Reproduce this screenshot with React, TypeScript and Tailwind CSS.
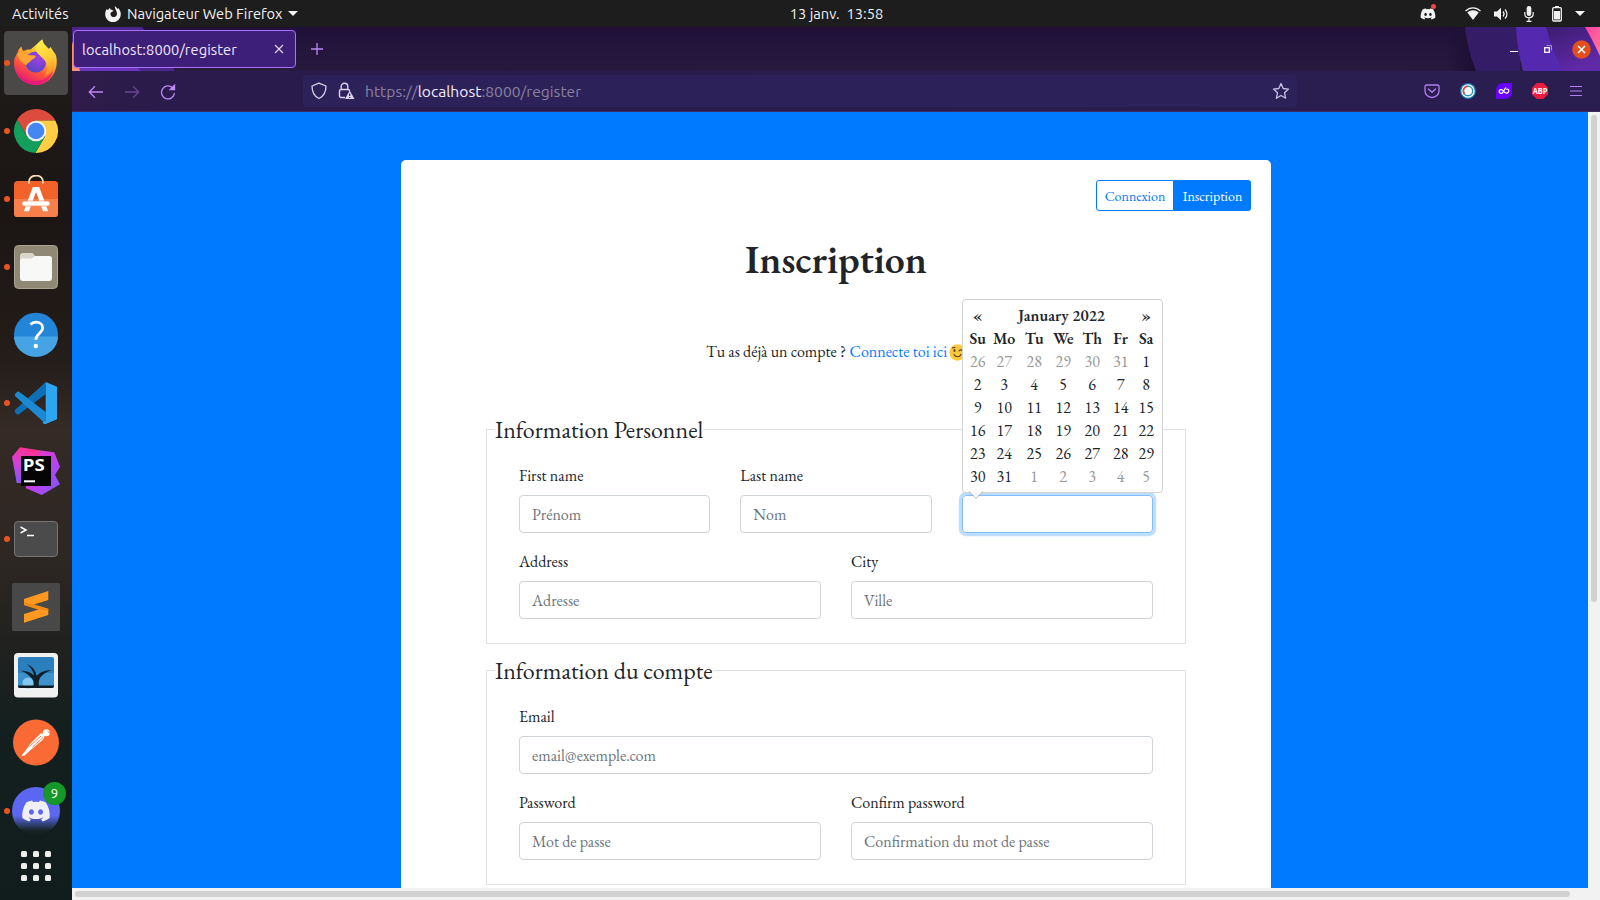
import type { ReactNode } from 'react';
import { FaDiscord } from 'react-icons/fa';

function DockSlot({ active, dot, children }: { active?: boolean; dot?: boolean; children: ReactNode }) {
  return (
    <div className={active ? 'relative flex h-16 w-16 shrink-0 items-center justify-center rounded bg-[#4b4948]' : 'relative flex h-16 w-16 shrink-0 items-center justify-center'}>
      {dot && <span className="absolute top-[29px] left-0 h-1.5 w-1.5 rounded-full bg-[#e95420]" />}
      {children}
    </div>
  );
}

function FirefoxLogo() {
  return (
    <svg width="48" height="48" viewBox="0 0 48 48">
      <defs>
        <linearGradient id="ffBody" x1="0.8" y1="0" x2="0.3" y2="1">
          <stop offset="0" stopColor="#fff44f" />
          <stop offset="0.4" stopColor="#ffb02e" />
          <stop offset="0.65" stopColor="#ff5a36" />
          <stop offset="1" stopColor="#e3127a" />
        </linearGradient>
        <radialGradient id="ffGlobe" cx="0.65" cy="0.3" r="0.8">
          <stop offset="0" stopColor="#a33fe0" />
          <stop offset="1" stopColor="#5247c8" />
        </radialGradient>
        <linearGradient id="ffTail" x1="0.3" y1="0" x2="0.6" y2="1">
          <stop offset="0" stopColor="#fff04d" />
          <stop offset="0.6" stopColor="#ffc833" />
          <stop offset="1" stopColor="#ff8a2b" />
        </linearGradient>
      </defs>
      <path d="M9.5 7.5c.2 2 1 3.500 2 4.500 2-1.300 4.500-1.800 7-1.500L30.300.5c.5 4 3 6 6.500 9.500l2-2c1 3 3.500 5 5.200 8.500C47.500 30 39 46 24 46 11 46 2 36 2 24c0-5 2-8 3.500-10C6 11 7.500 9 9.500 7.500z" fill="url(#ffBody)" />
      <circle cx="23.700" cy="23" r="10.500" fill="url(#ffGlobe)" />
      <path d="M30.300.5c.5 4 3 6 6.500 9.500 3 3.500 5.200 8 5 13-.3 7-4 12-9.800 14.500 3-3.500 4-8 2.500-12.500-1.500-5-7-8-10-12C22 9 25 4 30.300.5z" fill="url(#ffTail)" />
      <path d="M5.500 14c3.500-1.500 8-.5 11 2 3 .3 5.500.2 7.500 1-1 2.500-3.500 3-5 4.500-1 2-4 2-4.500 5C11 24 6 21 5.500 14z" fill="#ffa436" />
      <path d="M4 31c4 8 12 12 20 11 8-.6 14-5 17-10-2 8-9 14-17 14C14 46 6 39 4 31z" fill="#e6187f" opacity=".75" />
    </svg>
  );
}

function ChromeLogo() {
  return (
    <svg width="48" height="48" viewBox="0 0 48 48">
      <path d="M5.240 12.500A22 22 0 0 1 43.300 13.500L24 13.500V24L14.900 29.250Z" fill="#dd4b3e" />
      <path d="M43.300 13.500A22 22 0 0 1 23.400 46L33.100 29.250 24 24V13.500Z" fill="#ffce44" />
      <path d="M23.400 46A22 22 0 0 1 5.240 12.500L14.900 29.250 24 24 33.100 29.250Z" fill="#149e5c" />
      <circle cx="24" cy="24" r="10.300" fill="#f3f3f3" />
      <circle cx="24" cy="24" r="8.300" fill="#4486f4" />
    </svg>
  );
}

function SoftwareLogo() {
  return (
    <svg width="48" height="48" viewBox="0 0 48 48">
      <rect x="2" y="6" width="44" height="36" rx="3.500" fill="#f2622a" />
      <path d="M2 24h44v14.500a3.500 3.500 0 0 1-3.500 3.500h-37A3.500 3.500 0 0 1 2 38.500z" fill="#f67f4c" />
      <path d="M17 8.500V7c0-4 3-6.500 7-6.500S31 3 31 7v1.500" fill="none" stroke="#f4dcb4" strokeWidth="1.800" />
      <path d="M11.800 36.300 20.800 12h6.400l9 24.300h-5.200L24 17 17 36.300z" fill="#fff" />
      <rect x="10" y="26" width="28" height="5" rx="2.500" fill="#fff" stroke="#f4804f" strokeWidth=".6" />
    </svg>
  );
}

function FilesLogo() {
  return (
    <svg width="48" height="48" viewBox="0 0 48 48">
      <rect x="2.500" y="2.500" width="43" height="43" rx="4" fill="#8f8874" stroke="#aaa493" />
      <path d="M8 13c0-2 1-3 3-3h8.500c1.500 0 2 .8 2.800 2l1 2H37c2 0 3 1 3 3v5H8z" fill="#d9d6cc" />
      <path d="M8 18c0-1.500 1-2.500 2.500-2.500H20l3-2.500h14.500c1.500 0 2.500 1 2.500 2.500V35c0 2-1 3-3 3H11c-2 0-3-1-3-3z" fill="#f8f8f6" />
    </svg>
  );
}

function HelpLogo() {
  return (
    <svg width="48" height="48" viewBox="0 0 48 48">
      <circle cx="24" cy="23.700" r="22" fill="#2385d8" />
      <path d="M2 25.500a22 20.200 0 0 0 44 0z" fill="#47a4e4" />
      <path d="M18.500 13.500c1.500-1.500 3.500-2.300 5.500-2.300 4 0 6.600 2.200 6.600 5.600 0 5.500-6.800 6-6.800 12" fill="none" stroke="#fff" strokeWidth="2.800" />
      <circle cx="23.800" cy="35" r="2.200" fill="#fff" />
    </svg>
  );
}

function CodeLogo() {
  return (
    <svg width="48" height="48" viewBox="0 0 48 48">
      <path d="M3 31 33.700 3V15L7 35.300Q5.500 36 4.500 35L3 33.300Q2.300 32 3 31Z" fill="#0e6fb6" />
      <path d="M3 17Q2.300 15.500 3.500 14.500L5 13Q6 12 7.500 13L33.700 33V45Z" fill="#1b8ad3" />
      <path d="M33.700 3 45 7.700V40.300L33.700 45C32 45.300 31 44.500 30.500 43.500L33.700 42Z" fill="#2ea5ef" />
    </svg>
  );
}

function StormLogo() {
  return (
    <svg width="48" height="48" viewBox="0 0 48 48">
      <defs>
        <linearGradient id="psA" x1="0" y1="0" x2="1" y2="1">
          <stop offset="0" stopColor="#ff318c" />
          <stop offset="0.300" stopColor="#d63cd0" />
          <stop offset="0.600" stopColor="#b345f1" />
          <stop offset="1" stopColor="#765af8" />
        </linearGradient>
        <linearGradient id="psB" x1="0.600" y1="0" x2="0.300" y2="1">
          <stop offset="0" stopColor="#ff318c" />
          <stop offset="0.500" stopColor="#d340d8" />
          <stop offset="1" stopColor="#8a55f5" />
        </linearGradient>
      </defs>
      <path d="M25.300 3 42.300 5.300 48 19.700 43 28 48 37.300 29.700 48 14 41.300V20Z" fill="url(#psA)" />
      <path d="M0 9.700 8 .3 25.300 3V12L9 36H4.700Z" fill="url(#psB)" />
      <rect x="9" y="9" width="30" height="30" fill="#050505" />
      <text x="10.800" y="24.200" fill="#fff" fontFamily="'Open Sans', sans-serif" fontWeight="700" fontSize="16.500" textLength="22" lengthAdjust="spacingAndGlyphs">PS</text>
      <rect x="12" y="33.300" width="11" height="2" fill="#fff" />
    </svg>
  );
}

function TerminalLogo() {
  return (
    <svg width="48" height="48" viewBox="0 0 48 48">
      <rect x="2.500" y="6.500" width="43" height="35" rx="3.500" fill="#4b4b4b" stroke="#757575" />
      <path d="M8.500 12 14 15l-5.500 3M15 20.500h7" fill="none" stroke="#fff" strokeWidth="1.500" />
    </svg>
  );
}

function SublimeLogo() {
  return (
    <svg width="48" height="48" viewBox="0 0 48 48">
      <rect width="48" height="48" rx="1.500" fill="#484848" />
      <path d="M12 16 36.300 8v9L22 21.500l14.300 4.300V32L12 39.700V31l14.500-4.500L12 22Z" fill="#ff9820" />
      <path d="M12 22v-3l24.300 7.300v1.500L26.500 26.500Z" fill="#f48a10" />
    </svg>
  );
}

function ViewerLogo() {
  return (
    <svg width="48" height="48" viewBox="0 0 48 48">
      <rect x="2" y="2" width="44" height="44.500" rx="4" fill="#f1f1f1" />
      <rect x="6" y="6" width="36" height="31" rx="2" fill="#2c7fbd" />
      <path d="M6 22h36v14H6z" fill="#4a9fd4" opacity=".6" />
      <circle cx="16" cy="32" r="5.500" fill="#85c6f0" />
      <path d="M6 34.500h36V35a2 2 0 0 1-2 2H8a2 2 0 0 1-2-2z" fill="#0d1a22" />
      <path d="M21.500 36c.5-4 .3-6-1.500-8.500C17 24 14 22 9 19.500c5 .3 9.500 1.500 13 5-1-4.500-3-7.500-7-11.500 5.500 2.500 9 7 9.700 12 3-4 8-5.500 15.300-6-6 2-10.500 5-12.500 9-1 2.500-.8 5-.5 8z" fill="#0f202b" />
    </svg>
  );
}

function PostmanLogo() {
  return (
    <svg width="48" height="48" viewBox="0 0 48 48">
      <circle cx="24" cy="23.500" r="23" fill="#fa6a35" />
      <circle cx="34.300" cy="13.700" r="3.500" fill="#fff" />
      <path d="M35.500 12.500l2.500 1.500" stroke="#fa6a35" strokeWidth=".9" />
      <path d="M28.500 14.500c1.500-.5 3 .5 3.800 2.300.7 1.500-.8 3.200-2.300 4.700L21 29l-8.500 7.500-3 .8.500-1.300 7-9 .5-1.500z" fill="#fff" />
      <path d="M17.500 27.500 29 17M20.500 28 31 18.500" stroke="#fa6a35" strokeWidth=".8" />
    </svg>
  );
}

function DiscordLogo() {
  return (
    <div className="relative flex h-12 w-12 items-center justify-center rounded-full bg-linear-to-b from-[#5b67f0] from-60% to-[#15201f] to-92%">
      <FaDiscord className="h-[30px] w-[30px] text-[#f0f0f4]" />
      <span className="absolute -top-[5px] left-[31px] flex h-[23px] w-[23px] items-center justify-center rounded-full bg-[#16972a] text-[13px] text-white">9</span>
    </div>
  );
}

function AppsGrid() {
  return (
    <div className="grid h-[38px] shrink-0 grid-cols-3 place-content-center gap-1.5">
      {[0, 1, 2, 3, 4, 5, 6, 7, 8].map((n) => (
        <span key={n} className="h-1.5 w-1.5 rounded-[1.5px] bg-[#eeeeec]" />
      ))}
    </div>
  );
}

function Dock() {
  return (
    <aside className="flex w-[72px] shrink-0 flex-col items-center gap-1 bg-[linear-gradient(#1e1b1a_0%,#1b1614_22%,#241d1a_38%,#352a25_46%,#2e2723_60%,#1f211f_72%,#14201f_80%,#101d1c_100%)] pt-1">
      <DockSlot active dot><FirefoxLogo /></DockSlot>
      <DockSlot dot><ChromeLogo /></DockSlot>
      <DockSlot dot><SoftwareLogo /></DockSlot>
      <DockSlot dot><FilesLogo /></DockSlot>
      <DockSlot><HelpLogo /></DockSlot>
      <DockSlot dot><CodeLogo /></DockSlot>
      <DockSlot><StormLogo /></DockSlot>
      <DockSlot dot><TerminalLogo /></DockSlot>
      <DockSlot><SublimeLogo /></DockSlot>
      <DockSlot><ViewerLogo /></DockSlot>
      <DockSlot><PostmanLogo /></DockSlot>
      <DockSlot dot><DiscordLogo /></DockSlot>
      <AppsGrid />
    </aside>
  );
}

function SystemBar() {
  return (
    <header className="grid h-[27px] shrink-0 grid-cols-[1fr_auto_1fr] items-center bg-[#1d1d1d] text-[14.667px] text-[#f2f2f2]">
      <div className="flex items-center pl-3">
        <span className="w-[93px]">Activités</span>
        <svg width="16" height="16" viewBox="0 0 16 16" className="mr-[6px]">
          <path d="M1.500 3.200 3 4l2-2.200.6 2C7 3.500 8 4.200 8.500 5L6.500 6C5 7 5 9.500 7 10.700c2 1 5-.2 5-3C12 5 10 4 9.800.3 11 1 12 2 12.500 3l.7-1C15 4 15.800 6 15.800 8.200 15.800 12.500 12.500 16 8 16S.2 12.500.2 8.200C.2 6 .8 4.500 1.500 3.200z" fill="#f2f2f2" />
        </svg>
        <span>Navigateur Web Firefox</span>
        <svg width="10" height="5" viewBox="0 0 10 5" className="ml-[6px]"><path d="M0 0h10L5 5z" fill="#f2f2f2" /></svg>
      </div>
      <div className="flex gap-[7px] pl-[73px]"><span>13 janv.</span><span>13:58</span></div>
      <div className="flex items-center justify-end pr-[15px]">
        <span className="relative mr-[29px] flex">
          <FaDiscord className="h-4 w-4" />
          <span className="absolute -top-0.5 right-0 h-[5px] w-[5px] rounded-full bg-[#f04747]" />
        </span>
        <svg width="16" height="14" viewBox="0 0 16 14" className="mr-3">
          <path d="M.5 4C5-.3 11-.3 15.500 4" fill="none" stroke="#f2f2f2" strokeWidth="1.300" />
          <path d="M2.300 5.500c3.500-3 8-3 11.400 0L8 13z" fill="#f2f2f2" />
        </svg>
        <svg width="16" height="14" viewBox="0 0 16 14" className="mr-[15px]">
          <path d="M1 4.500h3L8 .8v12.400L4 9.500H1z" fill="#f2f2f2" />
          <path d="M10 4.500c1.300 1.500 1.300 3.500 0 5M12 2.500c2.600 2.600 2.600 6.400 0 9" fill="none" stroke="#f2f2f2" strokeWidth="1.200" />
        </svg>
        <svg width="10" height="16" viewBox="0 0 10 16" className="mr-[18px]">
          <rect x="2.700" y="0" width="4.600" height="10" rx="2.300" fill="#f2f2f2" />
          <path d="M.8 6v2C.8 13 9.200 13 9.200 8V6M5 12v3M2.500 15.300h5" fill="none" stroke="#f2f2f2" strokeWidth="1.200" />
        </svg>
        <svg width="10" height="16" viewBox="0 0 10 16" className="mr-[13px]">
          <path d="M3 0h4v2H3z" fill="#f2f2f2" />
          <rect x=".7" y="1.700" width="8.600" height="13.300" rx="1" fill="none" stroke="#f2f2f2" strokeWidth="1.300" />
          <path d="M2 5h6v8.500H2z" fill="#f2f2f2" />
        </svg>
        <svg width="10" height="5" viewBox="0 0 10 5"><path d="M0 0h10L5 5z" fill="#f2f2f2" /></svg>
      </div>
    </header>
  );
}

function TabStrip() {
  return (
    <div className="relative flex h-11 shrink-0 items-center bg-linear-to-b from-[#21113a] to-[#28193f]">
      <svg width="110" height="44" viewBox="0 0 110 44" className="absolute left-0 top-0">
        <path d="M0 0h70l33 44H0z" fill="#4a258c" />
        <path d="M0 38h62l7 6H0z" fill="#6a35bf" />
        <path d="M0 14l8 30H0z" fill="#ff8f7a" />
      </svg>
      <svg width="160" height="44" viewBox="0 0 160 44" className="absolute right-0 top-0">
        <defs>
          <linearGradient id="swirl" x1="0" y1="0" x2="0.500" y2="1">
            <stop offset="0" stopColor="#3c1c70" />
            <stop offset="1" stopColor="#6029a8" />
          </linearGradient>
          <linearGradient id="shade" x1="0" y1="0" x2="1" y2="0">
            <stop offset="0" stopColor="#1c0e33" stopOpacity="0" />
            <stop offset="1" stopColor="#1c0e33" />
          </linearGradient>
          <linearGradient id="pink" x1="0" y1="0" x2="1" y2="1">
            <stop offset="0" stopColor="#ff3fa8" />
            <stop offset="1" stopColor="#ff7a95" />
          </linearGradient>
        </defs>
        <path d="M4 0h22l10 44H10z" fill="url(#shade)" />
        <path d="M25 0h55v44H36Q27 22 25 0z" fill="#341c66" />
        <path d="M76 0h40l16 44H83Q77 22 76 0z" fill="#5429b0" />
        <path d="M106 0h54v44h-38Q112 22 106 0z" fill="url(#swirl)" />
        <path d="M145 0h15v29Q152 12 145 0z" fill="url(#pink)" />
      </svg>
      <div className="relative ml-px flex h-[38px] w-[223px] items-center justify-between rounded border border-[#ac70ff] bg-[#3d1e79] pr-[11px] pl-2 text-[14.667px] tracking-[0.08px] text-[#f0e8fb]">
        <span className="pt-0.5">localhost:8000/register</span>
        <svg width="10" height="10" viewBox="0 0 10 10"><path d="M1 1l8 8M9 1L1 9" stroke="#e6dcf7" strokeWidth="1.100" /></svg>
      </div>
      <svg width="12" height="12" viewBox="0 0 12 12" className="relative ml-[15px]"><path d="M6 0v12M0 6h12" stroke="#b98af5" strokeWidth="1.300" /></svg>
      <div className="relative ml-auto flex items-center pr-[9px]">
        <span className="mt-[4px] mr-[26px] h-px w-2 bg-white" />
        <svg width="8" height="8" viewBox="0 0 8 8" className="mr-5">
          <path d="M2.500.5h5v5" fill="none" stroke="#a795cc" />
          <rect x=".7" y="2.700" width="4.600" height="4.600" fill="none" stroke="#fff" strokeWidth="1.300" />
        </svg>
        <svg width="19" height="19" viewBox="0 0 19 19">
          <circle cx="9.500" cy="9.500" r="9.300" fill="#e24f1c" />
          <path d="M6 6l7 7M13 6l-7 7" stroke="#fff" strokeWidth="1.500" />
        </svg>
      </div>
    </div>
  );
}

function Toolbar() {
  return (
    <div className="flex h-[41px] shrink-0 items-center border-b border-[#3d2a60] bg-[linear-gradient(90deg,#311c4a_0px,#2a1b4b_60px,#281c4c_400px,#2a1e50_100%)]">
      <svg width="16" height="16" viewBox="0 0 16 16" fill="none" stroke="#bf88f8" strokeWidth="1.300" className="ml-4 mt-px"><path d="M15 8H1.500M7 2.300 1.300 8 7 13.700" /></svg>
      <svg width="16" height="16" viewBox="0 0 16 16" fill="none" stroke="#694593" strokeWidth="1.300" className="ml-5 mt-px"><path d="M1 8h13.500M9 2.300 14.700 8 9 13.700" /></svg>
      <svg width="16" height="16" viewBox="0 0 16 16" fill="none" stroke="#bf88f8" strokeWidth="1.300" className="ml-5 mt-px"><path d="M14.500 9A6.500 6.500 0 1 1 12.500 3.700" /><path d="M14.500 1.200v4.300H10.200z" fill="#bf88f8" /></svg>
      <div className="ml-[127px] flex h-8 w-[994px] items-center rounded bg-[#2c2259]">
        <svg width="16" height="18" viewBox="0 0 16 18" fill="none" stroke="#dcd2ee" strokeWidth="1.300" className="ml-2"><path d="M8 1.200 15 4c0 6-1.500 10-7 12.500C2.500 14 1 10 1 4z" strokeLinejoin="round" /></svg>
        <svg width="17" height="18" viewBox="0 0 17 18" className="ml-[11px]">
          <path d="M7 15.500H3a1.500 1.500 0 0 1-1.500-1.500V9A1.500 1.500 0 0 1 3 7.500h7A1.500 1.500 0 0 1 11.500 9M3.200 7.500V4.500a3.300 3.300 0 0 1 6.600 0v3" fill="none" stroke="#dcd2ee" strokeWidth="1.400" />
          <path d="M11.700 8.500 16.500 17H7z" fill="#dcd2ee" />
          <path d="M11.700 11.500v2.500M11.700 15v1" stroke="#2c2259" strokeWidth="1.200" />
        </svg>
        <span className="ml-2.5 pt-0.5 text-[15.6px] tracking-[0.03px] text-[#8a819f]">https://<span className="text-[#f3edfd]">localhost</span>:8000/register</span>
        <svg width="18" height="18" viewBox="0 0 18 18" fill="none" stroke="#c9bfe3" strokeWidth="1.300" strokeLinejoin="round" className="mr-[7px] ml-auto"><path d="M9 1.500l2.200 5 5.300.6-4 3.700 1.100 5.400L9 13.500l-4.600 2.700 1.100-5.400-4-3.700 5.300-.6z" /></svg>
      </div>
      <div className="ml-auto flex items-center gap-5 pr-4">
        <svg width="16" height="16" viewBox="0 0 16 16" fill="none" stroke="#b57df2" strokeWidth="1.300"><path d="M2.500 2h11A1.500 1.500 0 0 1 15 3.500V8A7 6.500 0 0 1 1 8V3.500A1.500 1.500 0 0 1 2.500 2zM4.500 6 8 9.300 11.500 6" strokeLinecap="round" /></svg>
        <svg width="16" height="16" viewBox="0 0 16 16"><circle cx="8" cy="8" r="8" fill="#1677ad" /><circle cx="8" cy="8" r="6.700" fill="#fff" /><circle cx="8" cy="8" r="4.700" fill="#fff" stroke="#2390c4" strokeWidth="1.400" /><path d="M8 3.300a4.700 4.700 0 0 0-3.500 7.700" fill="none" stroke="#e04a3a" strokeWidth="1.500" /></svg>
        <svg width="16" height="16" viewBox="0 0 16 16"><path d="M7 0h9v9a7 7 0 0 1-7 7H0V7a7 7 0 0 1 7-7z" fill="#6a00ff" /><path d="M9.800 4.500 6.800 9.500C5.600 11 3.200 10.300 3.200 8.500s2.200-2.500 3.400-1.200l2.400 2.200C10.500 10.800 12.800 9.800 12.800 7.900s-1.500-2-2.500-1.500" fill="none" stroke="#fff" strokeWidth="1.300" /></svg>
        <svg width="16" height="16" viewBox="0 0 16 16"><path d="M4.700 0h6.600L16 4.700v6.600L11.300 16H4.700L0 11.300V4.700z" fill="#ea1c3f" /><text x="8" y="10.900" textAnchor="middle" fill="#fff" fontFamily="'Open Sans', sans-serif" fontSize="8" fontWeight="700" textLength="14.600" lengthAdjust="spacingAndGlyphs">ABP</text></svg>
        <svg width="16" height="16" viewBox="0 0 16 16"><path d="M2 3.500h12M2 8h12M2 12.500h12" stroke="#b57df2" strokeWidth="1.200" /></svg>
      </div>
    </div>
  );
}

function Field({ label, placeholder, focused }: { label: string; placeholder: string; focused?: boolean }) {
  return (
    <div className="min-w-0 flex-1">
      <div className="mb-2 h-6 leading-[26px]">{label}</div>
      <div className={`flex h-[38px] items-center rounded border px-3 pt-0.5 text-[#6c757d] ${focused ? 'border-[#80bdff] shadow-[0_0_0_3.2px_rgba(0,123,255,0.25)]' : 'border-[#ced4da]'}`}>{placeholder}</div>
    </div>
  );
}

function Section({ title, children }: { title: string; children: ReactNode }) {
  return (
    <section className="h-[215px] border border-[#dee2e6] px-8">
      <h2 className="-mt-[18px] -ml-6 h-9 w-max bg-white text-2xl leading-9">{title}</h2>
      <div className="mt-[15px] flex flex-col gap-4">{children}</div>
    </section>
  );
}

const weeks = [
  [26, 27, 28, 29, 30, 31, 1],
  [2, 3, 4, 5, 6, 7, 8],
  [9, 10, 11, 12, 13, 14, 15],
  [16, 17, 18, 19, 20, 21, 22],
  [23, 24, 25, 26, 27, 28, 29],
  [30, 31, 1, 2, 3, 4, 5],
];

function Calendar() {
  return (
    <div className="absolute bottom-[40px] left-0 z-10 h-[194px] w-[201px] rounded border border-[#d3d3d3] bg-white p-1 leading-[23px]">
      <div className="grid grid-cols-[22px_31px_29px_29px_29px_28px_23px] text-center">
        <span className="font-semibold">«</span>
        <span className="col-span-5 font-semibold">January 2022</span>
        <span className="font-semibold">»</span>
        {['Su', 'Mo', 'Tu', 'We', 'Th', 'Fr', 'Sa'].map((d) => (
          <span key={d} className="font-semibold">{d}</span>
        ))}
        {weeks.flatMap((week, w) =>
          week.map((day, d) => (
            <span key={`${w}-${d}`} className={(w === 0 && day > 20) || (w === 5 && day < 20) ? 'text-[#999]' : ''}>{day}</span>
          )),
        )}
      </div>
      <svg width="14" height="8" viewBox="0 0 14 8" className="absolute -bottom-[7px] left-[6px]"><path d="M0 0h14L7 7z" fill="#fff" /><path d="M0 .5 7 7.300 14 .5" fill="none" stroke="#b5b5b5" /></svg>
    </div>
  );
}

function WinkFace() {
  return (
    <svg width="17" height="17" viewBox="0 0 17 17" className="ml-[2px]">
      <circle cx="8.500" cy="8.500" r="8.200" fill="#fcc93e" />
      <ellipse cx="5.500" cy="6.500" rx="1" ry="1.500" fill="#5c3d12" />
      <path d="M3.500 3.800 6 3.500M10 6.800c1-1 2.500-1 3.500 0M5 10.500c1.500 3 5.500 3 7 0" fill="none" stroke="#5c3d12" strokeWidth="1.200" strokeLinecap="round" />
    </svg>
  );
}

function RegisterPage() {
  return (
    <main className="flex-1 overflow-hidden bg-[#007bff] pl-[329px] font-['EB_Garamond','Liberation_Serif',serif] text-base text-[#212529]">
      <div className="mt-12 h-[760px] w-[870px] rounded-t-[5px] bg-white px-[85px] pt-5">
        <nav className="-mr-[65px] flex justify-end text-sm">
          <span className="flex h-[31px] w-[78px] items-center justify-center rounded-l-[3px] border border-[#007bff] text-[#007bff]">Connexion</span>
          <span className="flex h-[31px] w-[77px] items-center justify-center rounded-r-[3px] bg-[#007bff] text-white">Inscription</span>
        </nav>
        <h1 className="mt-[24px] h-12 text-center text-[40px] leading-[48px] font-semibold">Inscription</h1>
        <p className="mt-[57px] flex h-6 items-center pl-[220px] leading-6">
          <span>Tu as déjà un compte ?</span>
          <span className="ml-[3.5px] text-[#007bff]">Connecte toi ici</span>
          <WinkFace />
        </p>
        <div className="mt-[65px] flex flex-col gap-[26px]">
          <Section title="Information Personnel">
            <div className="flex gap-[30px]">
              <Field label="First name" placeholder="Prénom" />
              <Field label="Last name" placeholder="Nom" />
              <div className="relative flex min-w-0 flex-1">
                <Field label="" placeholder="" focused />
                <Calendar />
              </div>
            </div>
            <div className="flex gap-[30px]">
              <Field label="Address" placeholder="Adresse" />
              <Field label="City" placeholder="Ville" />
            </div>
          </Section>
          <Section title="Information du compte">
            <Field label="Email" placeholder="email@exemple.com" />
            <div className="flex gap-[30px]">
              <Field label="Password" placeholder="Mot de passe" />
              <Field label="Confirm password" placeholder="Confirmation du mot de passe" />
            </div>
          </Section>
        </div>
      </div>
    </main>
  );
}

export default function App() {
  return (
    <div className="flex h-[900px] w-[1600px] flex-col overflow-hidden font-['Ubuntu','Noto_Sans',sans-serif]">
      <SystemBar />
      <div className="flex min-h-0 flex-1">
        <Dock />
        <div className="flex min-w-0 flex-1 flex-col">
          <TabStrip />
          <Toolbar />
          <div className="flex min-h-0 flex-1">
            <RegisterPage />
            <div className="flex w-3 justify-center bg-[#f2f2f2] pt-[3px]"><div className="h-[487px] w-1.5 rounded-full bg-[#d1d1d1]" /></div>
          </div>
          <div className="flex h-3 shrink-0 items-center bg-[#f2f2f2] pl-[3px]"><div className="h-1.5 w-[1495px] rounded-full bg-[#d1d1d1]" /></div>
        </div>
      </div>
    </div>
  );
}
